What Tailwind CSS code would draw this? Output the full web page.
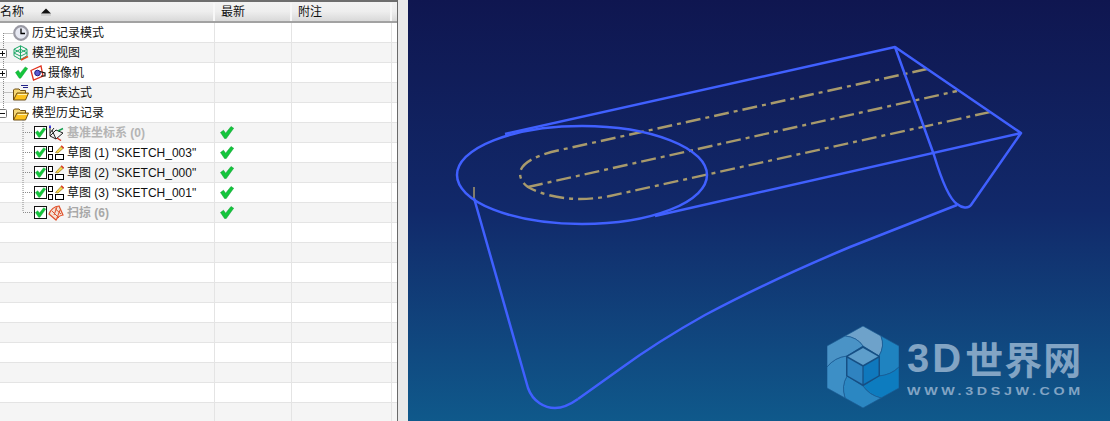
<!DOCTYPE html>
<html lang="zh-CN">
<head>
  <meta charset="UTF-8" />
  <title>部件导航器</title>
  <script src="https://cdn.jsdelivr.net/npm/@tailwindcss/browser@4"></script>
</head>
<body class="bg-[#e9e9e9] overflow-hidden">
  <svg class="hidden" xmlns="http://www.w3.org/2000/svg">
    <symbol id="tick" viewBox="0 0 14 13">
      <path d="M0.5 6.5 L3.5 4.2 L5.6 7.2 L11 0.5 L13.7 2.2 L6.2 12.6 L4.6 12.6 Z" fill="#14c63c" stroke="#0c9a30" stroke-width="0.5" />
    </symbol>
    <symbol id="folder" viewBox="0 0 16 16">
      <path d="M0.5 15 V5 L1.5 4 H6 L7.5 5.5 H12.5 V8" fill="#f6d774" stroke="#6e4e14" />
      <path d="M0.5 15 L4 8 H15.5 L12.5 15 Z" fill="#fcc21f" stroke="#6e4e14" />
      <path d="M4.5 9.5 H14" stroke="#fff2b0" />
    </symbol>
    <symbol id="sketch" viewBox="0 0 16 16">
      <rect x="0.5" y="1.5" width="4" height="5" fill="#fff" stroke="#000" />
      <rect x="0.5" y="9.5" width="4" height="5" fill="#fff" stroke="#000" />
      <rect x="7.5" y="9.5" width="8" height="5" fill="#fff" stroke="#000" />
      <path d="M7.5 7.5 L13 1.5 L15 3.5 L10 8 Z" fill="#f5d442" stroke="#8a6a1a" stroke-width="0.6" />
      <path d="M13.2 0.8 L15.8 3.2" stroke="#d8301c" stroke-width="1.4" />
    </symbol>
  </svg>

  <div class="flex h-[421px] w-[1110px] overflow-hidden font-['Liberation_Sans','Noto_Sans_CJK_SC',sans-serif] text-[12px] text-[#111]">
    <!-- tree table -->
    <div class="relative w-[398px] shrink-0 border-r border-[#6a6a6a] bg-white overflow-hidden">
      <div class="flex h-[23px] border-t-2 border-b-2 border-t-[#6e6e6e] border-b-[#a2a2a2] bg-gradient-to-b from-[#f3f3f3] via-[#eeeeee] to-[#d9d9d9] pt-px text-[#111]">
        <div class="relative flex w-[215px] items-center border-r-2 border-[#f7f7f7]">
          名称
          <svg class="absolute left-[40px] top-[5px]" width="12" height="8" viewBox="0 0 12 8"><path d="M6 0.5 L11 5.5 H1 Z" fill="#111" /><path d="M1 7 H11" stroke="#bbb" /></svg>
        </div>
        <div class="flex w-[77px] items-center border-r-2 border-[#f7f7f7] pl-[6px]">最新</div>
        <div class="flex w-[100px] items-center border-r-2 border-[#f7f7f7] pl-[6px]">附注</div>
      </div>

      <!-- rows -->
      <div class="flex h-5 border-b border-[#e4e4e4] bg-white">
        <div class="flex w-[215px] items-center gap-[3px] border-r border-[#e4e4e4] pl-[13px]">
          <svg width="16" height="16" viewBox="0 0 16 16"><circle cx="8" cy="8" r="6.8" fill="#e6e8f2" stroke="#9a9aa4" stroke-width="2.2" /><path d="M8 3.5 V8.5 H12" fill="none" stroke="#000" stroke-width="1.3" /></svg>
          <span>历史记录模式</span>
        </div>
        <div class="w-[77px] border-r border-[#e4e4e4]"></div>
        <div class="w-[100px] border-r border-[#e4e4e4]"></div>
      </div>
      <div class="flex h-5 border-b border-[#e4e4e4] bg-[#f5f5f5]">
        <div class="flex w-[215px] items-center gap-[3px] border-r border-[#e4e4e4] pl-[13px]">
          <svg width="16" height="16" viewBox="0 0 16 16"><path d="M7.5 0.8 L14 4.2 V10.8 L7.5 14.5 L1 10.8 V4.2 Z M1 4.2 L7.5 7.8 L14 4.2 M7.5 0.8 V14.5 M1 8 L7.5 4.2 L14 8 M1 8 L7.5 11.2 L14 8" fill="none" stroke="#1fa868" stroke-width="1" /><path d="M8 15 L15 11.5" stroke="#e8481c" stroke-width="1.6" /></svg>
          <span>模型视图</span>
        </div>
        <div class="w-[77px] border-r border-[#e4e4e4]"></div>
        <div class="w-[100px] border-r border-[#e4e4e4]"></div>
      </div>
      <div class="flex h-5 border-b border-[#e4e4e4] bg-white">
        <div class="flex w-[215px] items-center border-r border-[#e4e4e4] pl-[15px]">
          <svg width="13" height="13" class="mr-[2px]"><use href="#tick" /></svg>
          <svg width="16" height="16" viewBox="0 0 16 16" class="mr-[2px]"><path d="M1 5.5 L11 1 L13 11 L3.5 15 Z" fill="#fff" stroke="#e0301c" stroke-width="1.3" /><circle cx="7.5" cy="8" r="2.8" fill="#5a5ad0" stroke="#1c1c80" /><path d="M10 6.5 L15 8 V11 L11 11" fill="none" stroke="#111" stroke-width="1.2" /></svg>
          <span>摄像机</span>
        </div>
        <div class="w-[77px] border-r border-[#e4e4e4]"></div>
        <div class="w-[100px] border-r border-[#e4e4e4]"></div>
      </div>
      <div class="flex h-5 border-b border-[#e4e4e4] bg-[#f5f5f5]">
        <div class="flex w-[215px] items-center gap-[3px] border-r border-[#e4e4e4] pl-[13px]">
          <svg width="16" height="16" viewBox="0 0 16 16"><use href="#folder" /><path d="M8 0.5 H15 M10 2.5 H15" stroke="#24248a" /></svg>
          <span>用户表达式</span>
        </div>
        <div class="w-[77px] border-r border-[#e4e4e4]"></div>
        <div class="w-[100px] border-r border-[#e4e4e4]"></div>
      </div>
      <div class="flex h-5 border-b border-[#e4e4e4] bg-white">
        <div class="flex w-[215px] items-center gap-[3px] border-r border-[#e4e4e4] pl-[13px]">
          <svg width="16" height="16"><use href="#folder" /></svg>
          <span>模型历史记录</span>
        </div>
        <div class="w-[77px] border-r border-[#e4e4e4]"></div>
        <div class="w-[100px] border-r border-[#e4e4e4]"></div>
      </div>
      <div class="flex h-5 border-b border-[#e4e4e4] bg-[#f5f5f5]">
        <div class="flex w-[215px] items-center border-r border-[#e4e4e4] pl-[34px]">
          <span class="mr-px flex h-[13px] w-[13px] items-center justify-center border border-[#111] bg-white"><svg width="11" height="11"><use href="#tick" /></svg></span>
          <svg width="16" height="16" viewBox="0 0 16 16" class="mr-[3px]"><path d="M2 2 V11 L8 14 L15 8 L8 5 L2 11 M4 5 L8 14 M2 8 L6 3" fill="none" stroke="#222" stroke-width="1" /><path d="M2 3 V0.5" stroke="#1c1cd8" stroke-width="1.6" /><path d="M10 6 L15 3.5" stroke="#18a050" stroke-width="1.4" /><path d="M9 13 L13 15.5" stroke="#d8301c" stroke-width="1.4" /></svg>
          <span class="font-bold text-[#b4b4b4]">基准坐标系 (0)</span>
        </div>
        <div class="flex w-[77px] items-center border-r border-[#e4e4e4] pl-[5px]"><svg width="14" height="13"><use href="#tick" /></svg></div>
        <div class="w-[100px] border-r border-[#e4e4e4]"></div>
      </div>
      <div class="flex h-5 border-b border-[#e4e4e4] bg-white">
        <div class="flex w-[215px] items-center border-r border-[#e4e4e4] pl-[34px]">
          <span class="mr-px flex h-[13px] w-[13px] items-center justify-center border border-[#111] bg-white"><svg width="11" height="11"><use href="#tick" /></svg></span>
          <svg width="16" height="16" class="mr-[3px]"><use href="#sketch" /></svg>
          <span>草图 (1) "SKETCH_003"</span>
        </div>
        <div class="flex w-[77px] items-center border-r border-[#e4e4e4] pl-[5px]"><svg width="14" height="13"><use href="#tick" /></svg></div>
        <div class="w-[100px] border-r border-[#e4e4e4]"></div>
      </div>
      <div class="flex h-5 border-b border-[#e4e4e4] bg-[#f5f5f5]">
        <div class="flex w-[215px] items-center border-r border-[#e4e4e4] pl-[34px]">
          <span class="mr-px flex h-[13px] w-[13px] items-center justify-center border border-[#111] bg-white"><svg width="11" height="11"><use href="#tick" /></svg></span>
          <svg width="16" height="16" class="mr-[3px]"><use href="#sketch" /></svg>
          <span>草图 (2) "SKETCH_000"</span>
        </div>
        <div class="flex w-[77px] items-center border-r border-[#e4e4e4] pl-[5px]"><svg width="14" height="13"><use href="#tick" /></svg></div>
        <div class="w-[100px] border-r border-[#e4e4e4]"></div>
      </div>
      <div class="flex h-5 border-b border-[#e4e4e4] bg-white">
        <div class="flex w-[215px] items-center border-r border-[#e4e4e4] pl-[34px]">
          <span class="mr-px flex h-[13px] w-[13px] items-center justify-center border border-[#111] bg-white"><svg width="11" height="11"><use href="#tick" /></svg></span>
          <svg width="16" height="16" class="mr-[3px]"><use href="#sketch" /></svg>
          <span>草图 (3) "SKETCH_001"</span>
        </div>
        <div class="flex w-[77px] items-center border-r border-[#e4e4e4] pl-[5px]"><svg width="14" height="13"><use href="#tick" /></svg></div>
        <div class="w-[100px] border-r border-[#e4e4e4]"></div>
      </div>
      <div class="flex h-5 border-b border-[#e4e4e4] bg-[#f5f5f5]">
        <div class="flex w-[215px] items-center border-r border-[#e4e4e4] pl-[34px]">
          <span class="mr-px flex h-[13px] w-[13px] items-center justify-center border border-[#111] bg-white"><svg width="11" height="11"><use href="#tick" /></svg></span>
          <svg width="16" height="16" viewBox="0 0 16 16" class="mr-[3px]"><path d="M1 9 C3 4 7 1.5 11 1 L15 10 C12 10.5 9.5 12 8 15 Z" fill="#f3e2d6" stroke="#e0502a" stroke-width="1.2" /><path d="M4 6 L11 13 M7 3.5 L13 9 M9 2 L6 10 M12 5 L9 13" stroke="#e0502a" /></svg>
          <span class="font-bold text-[#a8a8a8]">扫掠 (6)</span>
        </div>
        <div class="flex w-[77px] items-center border-r border-[#e4e4e4] pl-[5px]"><svg width="14" height="13"><use href="#tick" /></svg></div>
        <div class="w-[100px] border-r border-[#e4e4e4]"></div>
      </div>

      <div class="flex h-5 border-b border-[#e4e4e4] bg-white"><div class="w-[215px] border-r border-[#e4e4e4]"></div><div class="w-[77px] border-r border-[#e4e4e4]"></div><div class="w-[100px] border-r border-[#e4e4e4]"></div></div>
      <div class="flex h-5 border-b border-[#e4e4e4] bg-[#f5f5f5]"><div class="w-[215px] border-r border-[#e4e4e4]"></div><div class="w-[77px] border-r border-[#e4e4e4]"></div><div class="w-[100px] border-r border-[#e4e4e4]"></div></div>
      <div class="flex h-5 border-b border-[#e4e4e4] bg-white"><div class="w-[215px] border-r border-[#e4e4e4]"></div><div class="w-[77px] border-r border-[#e4e4e4]"></div><div class="w-[100px] border-r border-[#e4e4e4]"></div></div>
      <div class="flex h-5 border-b border-[#e4e4e4] bg-[#f5f5f5]"><div class="w-[215px] border-r border-[#e4e4e4]"></div><div class="w-[77px] border-r border-[#e4e4e4]"></div><div class="w-[100px] border-r border-[#e4e4e4]"></div></div>
      <div class="flex h-5 border-b border-[#e4e4e4] bg-white"><div class="w-[215px] border-r border-[#e4e4e4]"></div><div class="w-[77px] border-r border-[#e4e4e4]"></div><div class="w-[100px] border-r border-[#e4e4e4]"></div></div>
      <div class="flex h-5 border-b border-[#e4e4e4] bg-[#f5f5f5]"><div class="w-[215px] border-r border-[#e4e4e4]"></div><div class="w-[77px] border-r border-[#e4e4e4]"></div><div class="w-[100px] border-r border-[#e4e4e4]"></div></div>
      <div class="flex h-5 border-b border-[#e4e4e4] bg-white"><div class="w-[215px] border-r border-[#e4e4e4]"></div><div class="w-[77px] border-r border-[#e4e4e4]"></div><div class="w-[100px] border-r border-[#e4e4e4]"></div></div>
      <div class="flex h-5 border-b border-[#e4e4e4] bg-[#f5f5f5]"><div class="w-[215px] border-r border-[#e4e4e4]"></div><div class="w-[77px] border-r border-[#e4e4e4]"></div><div class="w-[100px] border-r border-[#e4e4e4]"></div></div>
      <div class="flex h-5 border-b border-[#e4e4e4] bg-white"><div class="w-[215px] border-r border-[#e4e4e4]"></div><div class="w-[77px] border-r border-[#e4e4e4]"></div><div class="w-[100px] border-r border-[#e4e4e4]"></div></div>
      <div class="flex h-5 border-b border-[#e4e4e4] bg-[#f5f5f5]"><div class="w-[215px] border-r border-[#e4e4e4]"></div><div class="w-[77px] border-r border-[#e4e4e4]"></div><div class="w-[100px] border-r border-[#e4e4e4]"></div></div>

      <!-- tree connectors drawn over the rows -->
      <svg class="absolute left-0 top-0" width="60" height="225" viewBox="0 0 60 225">
        <path d="M3.5 33 V112 M3.5 33.5 H13 M3.5 92.5 H13 M23 120 V212 M23 132.5 H33 M23 152.5 H33 M23 172.5 H33 M23 192.5 H33 M23 212.5 H33" fill="none" stroke="#8a8a8a" stroke-dasharray="1 1" />
        <g fill="#fff" stroke="#777">
          <rect x="-1.5" y="49.5" width="8" height="8" rx="1" />
          <rect x="-1.5" y="69.5" width="8" height="8" rx="1" />
          <rect x="-1.5" y="109.5" width="8" height="8" rx="1" />
        </g>
        <path d="M0 53.5 H5 M2.5 51 V56 M0 73.5 H5 M2.5 71 V76 M0 113.5 H5" stroke="#111" />
      </svg>
    </div>

    <!-- splitter -->
    <div class="w-[10px] shrink-0 bg-[#e9e9e9]"></div>

    <!-- graphics window -->
    <div class="relative h-[421px] flex-1 bg-gradient-to-b from-[#0f1650] via-[#11296a] to-[#0f598b]">
      <svg class="block" width="702" height="421" viewBox="408 0 702 421">
        <g fill="none" stroke="#a89a6c" stroke-width="2.4" stroke-dasharray="15 5 4 5">
          <path d="M927 69 L560 150 C540 154 521 162 520 173 C520 180 524 184 528 187 C540 194 560 199 580 199 C590 199 600 198 610 196 L990 112" />
          <path d="M528 187 L957 91" />
        </g>
        <path d="M474 187 V198" stroke="#a89a6c" stroke-width="1.5" />
        <g fill="none" stroke="#4060ff" stroke-width="2.5" stroke-linejoin="round">
          <ellipse cx="582" cy="175" rx="125" ry="49" />
          <path d="M505 134 L895 47 L1021 133 L655 216" />
          <path d="M895 47 L934 155 C940 175 948 198 957 204 C962 208 968 209 971 205 L1021 133" />
          <path d="M957 205 L850 247 C800 268 750 291 705 315 C680 329 650 347 620 369 L578 399" />
          <path d="M474 198 L528 388 C533 402 545 408 555 408 C563 408 571 404 578 399" />
        </g>
      </svg>

      <!-- watermark -->
      <div class="absolute left-[419px] top-[326px] flex items-start gap-[8px] text-[#82a4c4]">
        <svg width="72" height="82" viewBox="0 0 72 82">
          <g stroke="#1b5a92" stroke-width="0.7">
            <path d="M18 10 L36 0 L54 10 Q58 20 52 30 L36 20 Q30 11 18 10 Z" fill="#6ea2ca" />
            <path d="M54 10 L72 20 V41 Q64 49 52 50 V30 Q58 20 54 10 Z" fill="#1f83c0" />
            <path d="M72 41 V62 L54 72 Q42 69 36 60 L52 50 Q64 49 72 41 Z" fill="#0d7cbf" />
            <path d="M54 72 L36 82 L18 72 Q14 60 20 50 L36 60 Q42 69 54 72 Z" fill="#2b87c2" />
            <path d="M18 72 L0 62 V41 Q8 31 20 30 V50 Q14 60 18 72 Z" fill="#3d8fc6" />
            <path d="M0 41 V20 L18 10 Q30 11 36 20 L20 30 Q8 31 0 41 Z" fill="#4a93c6" />
          </g>
          <path d="M36 20 L53 30 V50 L36 60 L19 50 V30 Z" fill="#164f84" />
          <path d="M36 22 L51 30.5 L36 39 L21 30.5 Z" fill="#5e9ecb" />
          <path d="M20.5 32 L35.4 40.5 V58 L20.5 49.5 Z" fill="#2f83c0" />
          <path d="M51.5 32 L36.6 40.5 V58 L51.5 49.5 Z" fill="#0f78bd" />
        </svg>
        <div class="mt-[11px]">
          <div class="flex h-[41px] items-center whitespace-nowrap font-bold leading-none">
            <span class="mr-px text-[40px] tracking-[3px]">3D</span><span class="font-['Noto_Sans_CJK_SC',sans-serif] text-[38px] tracking-[1px]">世界网</span>
          </div>
          <div class="mt-[8px] origin-left scale-x-[1.3] whitespace-nowrap text-[11px] font-bold leading-none tracking-[2.8px]">WWW.3DSJW.COM</div>
        </div>
      </div>
    </div>
  </div>
</body>
</html>
